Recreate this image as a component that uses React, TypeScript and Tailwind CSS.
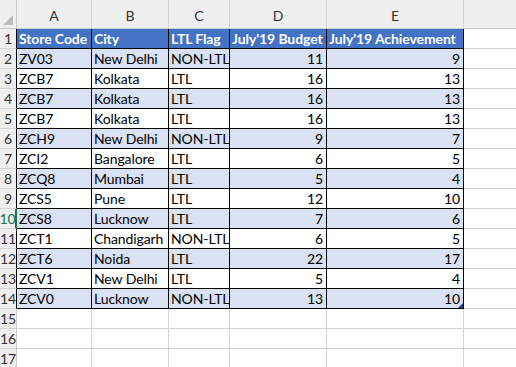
const COLS = ['A', 'B', 'C', 'D', 'E'];

const HEAD = ['Store Code', 'City', 'LTL Flag', "July'19 Budget", "July'19 Achievement"];

const ROWS: [string, string, string, number, number][] = [
  ['ZV03', 'New Delhi', 'NON-LTL', 11, 9],
  ['ZCB7', 'Kolkata', 'LTL', 16, 13],
  ['ZCB7', 'Kolkata', 'LTL', 16, 13],
  ['ZCB7', 'Kolkata', 'LTL', 16, 13],
  ['ZCH9', 'New Delhi', 'NON-LTL', 9, 7],
  ['ZCI2', 'Bangalore', 'LTL', 6, 5],
  ['ZCQ8', 'Mumbai', 'LTL', 5, 4],
  ['ZCS5', 'Pune', 'LTL', 12, 10],
  ['ZCS8', 'Lucknow', 'LTL', 7, 6],
  ['ZCT1', 'Chandigarh', 'NON-LTL', 6, 5],
  ['ZCT6', 'Noida', 'LTL', 22, 17],
  ['ZCV1', 'New Delhi', 'LTL', 5, 4],
  ['ZCV0', 'Lucknow', 'NON-LTL', 13, 10],
];

const GRID = 'grid grid-cols-[17px_75px_77px_61px_97px_137px_1fr]';
const CELL = 'h-[20px] flex items-center pl-[2px] pr-[3px] pt-[1px] border-r border-b border-black whitespace-nowrap tracking-[-0.1px]';

function RowNum({ n, table, active }: { n: number; table?: boolean; active?: boolean }) {
  return (
    <div
      className={`h-[20px] flex items-center justify-center pt-[1px] bg-[#efefef] border-b border-[#d4d4d4] ${
        active
          ? 'border-r-2 border-r-[#217346] text-[#217346]'
          : table
          ? 'border-r border-r-black text-[#333]'
          : 'border-r border-r-[#c8c8c8] text-[#333]'
      }`}
    >
      {n}
    </div>
  );
}

export default function App() {
  return (
    <div
      className="w-[516px] h-[367px] overflow-hidden bg-white text-[14px] leading-none text-black"
      style={{ fontFamily: 'Lato, "Open Sans", sans-serif' }}
    >
      {/* Column letters */}
      <div className={`${GRID} h-[29px]`}>
        <div className="bg-[#efefef] border-r border-b border-[#c8c8c8] flex items-end justify-end p-[3px]">
          <div className="w-0 h-0 border-l-[10px] border-l-transparent border-b-[10px] border-b-[#bdbdbd]" />
        </div>
        {COLS.map(c => (
          <div
            key={c}
            className="bg-[#efefef] border-r border-b border-[#d4d4d4] border-b-[#c8c8c8] flex items-end justify-center pb-[5px] text-[#333]"
          >
            {c}
          </div>
        ))}
        <div className="bg-[#efefef] border-b border-[#c8c8c8]" />
      </div>

      {/* Header row */}
      <div className={GRID}>
        <RowNum n={1} table />
        {HEAD.map(h => (
          <div key={h} className={`${CELL} bg-[#4472c4] text-white font-bold`}>
            {h}
          </div>
        ))}
        <div className="h-[20px] border-b border-[#d4d4d4]" />
      </div>

      {/* Data rows */}
      {ROWS.map((r, i) => {
        const band = i % 2 === 0 ? 'bg-[#d9e1f2]' : 'bg-white';
        const last = i === ROWS.length - 1;
        return (
          <div key={i} className={GRID}>
            <RowNum n={i + 2} table active={i + 2 === 10} />
            <div className={`${CELL} ${band}`}>{r[0]}</div>
            <div className={`${CELL} ${band}`}>{r[1]}</div>
            <div className={`${CELL} ${band}`}>{r[2]}</div>
            <div className={`${CELL} ${band} justify-end`}>{r[3]}</div>
            <div className={`${CELL} ${band} justify-end relative`}>
              {r[4]}
              {last && (
                <div className="absolute right-0 bottom-0 w-0 h-0 border-l-[5px] border-l-transparent border-b-[5px] border-b-[#1f3f7a]" />
              )}
            </div>
            <div className="h-[20px] border-b border-[#d4d4d4]" />
          </div>
        );
      })}

      {/* Empty rows */}
      {[15, 16, 17].map(n => (
        <div key={n} className={GRID}>
          <RowNum n={n} />
          {COLS.map(c => (
            <div key={c} className="h-[20px] border-r border-b border-[#d4d4d4]" />
          ))}
          <div className="h-[20px] border-b border-[#d4d4d4]" />
        </div>
      ))}
    </div>
  );
}
